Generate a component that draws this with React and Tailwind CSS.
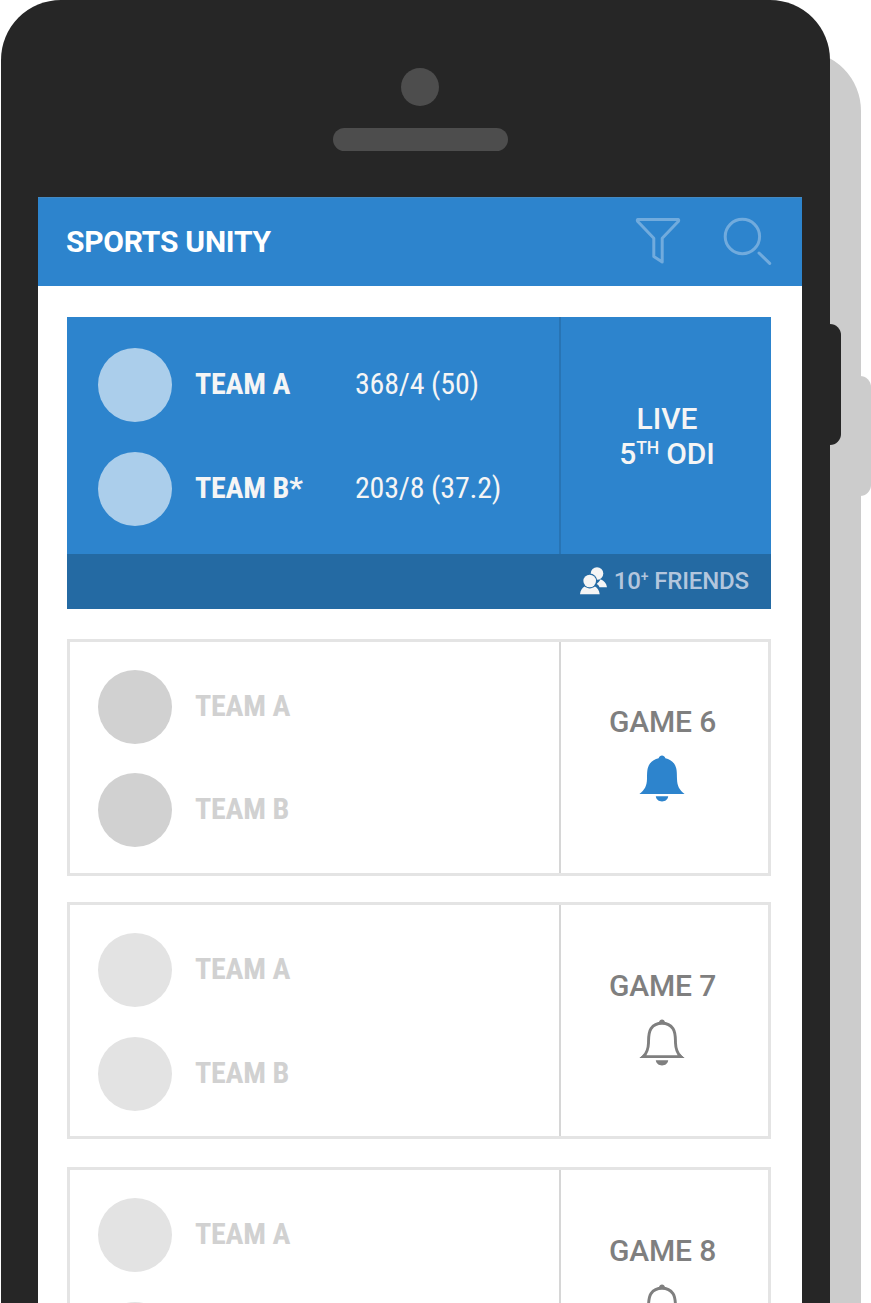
const CONDENSED = "font-['Roboto_Condensed','Roboto',sans-serif] [font-stretch:75%]";

function FilterIcon() {
  return (
    <svg width="46" height="50" viewBox="0 2 46 50" fill="none" stroke="#71ABDD" strokeWidth="3" strokeLinejoin="round">
      <path d="M2.6 4.500H43.400Q44 5.500 43.200 6.500L27.200 23.200V47L18.800 41.500V23.200L2.800 6.500Q2 5.500 2.600 4.500Z" />
    </svg>
  );
}

function SearchIcon() {
  return (
    <svg width="50" height="50" viewBox="0 2 50 50" fill="none" stroke="#71ABDD" strokeWidth="3" strokeLinecap="round">
      <circle cx="19.400" cy="21.500" r="17.200" />
      <path d="M36 38L46.700 48.400" />
    </svg>
  );
}

function BellIcon({ active }) {
  return (
    <svg width="46" height="47" viewBox="0 0 46 47" className="block">
      {active ? (
        <path
          fill="#2D84CD"
          d="M.4 39C5.6 35 7.800 31 8 24C8.100 17 8 13 10.800 8.800C13 5.600 16 4.200 19.600 3.300C20.300 1.500 21.500.500 23 .500S25.700 1.500 26.400 3.300C30 4.200 33 5.600 35.200 8.800C38 13 37.900 17 38 24C38.200 31 40.400 35 45.600 39Z"
        />
      ) : (
        <>
          <path
            fill="none"
            stroke="#7F7F7F"
            strokeWidth="2.900"
            d="M4.300 37.600C8 34 9.300 30 9.500 24C9.600 17 9.400 13.500 12 9.600C14.500 6 18.500 4.300 23 4.300S31.500 6 34 9.600C36.600 13.500 36.400 17 36.500 24C36.700 30 38 34 41.700 37.600Z"
          />
          <path fill="#7F7F7F" d="M19.600 4C20.300 1.500 21.500.500 23 .500S25.700 1.500 26.400 4ZM.400 39L5 35.300L6 39ZM45.600 39L41 35.300L40 39Z" />
        </>
      )}
      <path fill={active ? "#2D84CD" : "#7F7F7F"} d="M16.800 41.300H29.200C28.800 44.500 26.300 46.500 23 46.500S17.200 44.500 16.800 41.300Z" />
    </svg>
  );
}

function FriendsIcon() {
  return (
    <svg width="28" height="28" viewBox="0 0 28 28" fill="#F5F5F5">
      <circle cx="17" cy="6.500" r="6.300" />
      <path d="M16.500 17C18 16 19.500 14.500 20.500 12.300C24 13.600 26.300 16 27 20.300H19.500C19 18.800 18 17.700 16.500 17Z" />
      <circle cx="9.700" cy="14" r="7.500" fill="#246AA3" />
      <circle cx="9.700" cy="14" r="6.300" />
      <path d="M0 27.300C.500 23.500 2 20.800 4.600 19.600C7.500 22 12 22 15 19.600C17.600 20.800 19.200 23.500 19.700 27.300Z" />
    </svg>
  );
}

function Team({ name, score, circle, text }) {
  return (
    <div className="flex h-[74px] items-center tracking-[-0.2px]">
      <div className={`size-[74px] shrink-0 rounded-full ${circle}`} />
      <div className={`ml-[23px] w-40 shrink-0 pb-[3px] text-[30px] leading-9 font-bold whitespace-nowrap ${CONDENSED} ${text}`}>{name}</div>
      {score && <div className={`pb-[3px] text-[30px] leading-9 whitespace-nowrap text-[#F5F5F5] ${CONDENSED}`}>{score}</div>}
    </div>
  );
}

function LiveCard() {
  return (
    <section className="h-[292px] bg-[#2D84CD]">
      <div className="flex h-[237px]">
        <div className="flex w-[494px] shrink-0 flex-col gap-[30px] border-r-2 border-[#2874B4] pt-[31px] pl-[31px]">
          <Team name="TEAM A" score="368/4 (50)" circle="bg-[#ABCEEB]" text="text-[#F5F5F5]" />
          <Team name="TEAM B*" score="203/8 (37.2)" circle="bg-[#ABCEEB]" text="text-[#F5F5F5]" />
        </div>
        <div className="flex-1 pt-[84px] pl-[2px] text-center text-[30px] leading-[35px] font-medium text-[#F5F5F5]">
          <div>LIVE</div>
          <div className="tracking-[-0.15px]">
            5<span className="relative -top-[10px] text-[17.500px] leading-none">TH</span> ODI
          </div>
        </div>
      </div>
      <div className="flex h-[55px] items-center justify-end bg-[#246AA3] pr-[22px] pb-[2px] text-[24px] font-medium text-[#B3C6DD]">
        <FriendsIcon />
        <div className="ml-[6px] tracking-[-0.15px] whitespace-nowrap">
          10<span className="relative -top-[8px] text-[14px] leading-none">+</span> FRIENDS
        </div>
      </div>
    </section>
  );
}

function GameCard({ title, active, gap, circle, pad, teams = ["TEAM A", "TEAM B"] }) {
  return (
    <section className="flex h-[237px] shrink-0 border-[3px] border-[#E4E4E4]">
      <div className={`flex w-[491px] shrink-0 flex-col border-r-2 border-[#D6D6D6] pt-[28px] pl-[28px] ${gap}`}>
        {teams.map((name, i) => (
          <Team key={i} name={name} circle={circle} text="text-[#D1D1D1]" />
        ))}
      </div>
      <div className={`flex flex-1 flex-col items-center pr-[4px] ${pad}`}>
        <div className="text-[30px] leading-9 font-medium tracking-[-0.150px] whitespace-nowrap text-[#7F7F7F]">{title}</div>
        <div className="mt-[15px] mr-[1.500px]">
          <BellIcon active={active} />
        </div>
      </div>
    </section>
  );
}

export default function App() {
  return (
    <div className="relative h-[1303px] w-[871px] overflow-hidden bg-white font-['Roboto',sans-serif]">
      <div className="absolute top-[51px] left-[30.500px] h-[1400px] w-[830px] rounded-[60px] bg-[#CCCCCC]" />
      <div className="absolute top-[375.500px] left-[840px] h-[120px] w-[31px] rounded-[11px] bg-[#CCCCCC]" />
      <div className="absolute top-[324px] left-[810px] h-[120.500px] w-[31px] rounded-[11px] bg-[#262626]" />
      <div className="relative ml-[0.500px] flex h-[1500px] w-[829.500px] flex-col items-center rounded-[60px] bg-[#262626] pt-[68px] pl-[9.500px]">
        <div className="size-[38px] rounded-full bg-[#4D4D4D]" />
        <div className="mt-[22px] ml-[1px] h-[23px] w-[174.500px] rounded-full bg-[#4D4D4D]" />
        <div className="mt-[46px] w-[764px] flex-1 bg-white">
          <header className="flex h-[89px] items-center border-t border-[#4389C2] bg-[#2D84CD] pl-[28px]">
            <h1 className="flex-1 text-[30px] leading-9 font-bold tracking-[-0.250px] text-white">SPORTS UNITY</h1>
            <FilterIcon />
            <div className="mr-[29px] ml-[42px]">
              <SearchIcon />
            </div>
          </header>
          <main className="mt-[31px] ml-[29px] w-[704px]">
            <LiveCard />
            <div className="mt-[30px]">
              <GameCard title="GAME 6" active pad="pt-[62px]" gap="gap-[29px]" circle="bg-[#D1D1D1]" />
            </div>
            <div className="mt-[26px]">
              <GameCard title="GAME 7" pad="pt-[63px]" gap="gap-[30px]" circle="bg-[#E3E3E3]" />
            </div>
            <div className="mt-[28px]">
              <GameCard title="GAME 8" pad="pt-[63px]" gap="gap-[30px]" circle="bg-[#E3E3E3]" teams={["TEAM A", ""]} />
            </div>
          </main>
        </div>
      </div>
    </div>
  );
}
